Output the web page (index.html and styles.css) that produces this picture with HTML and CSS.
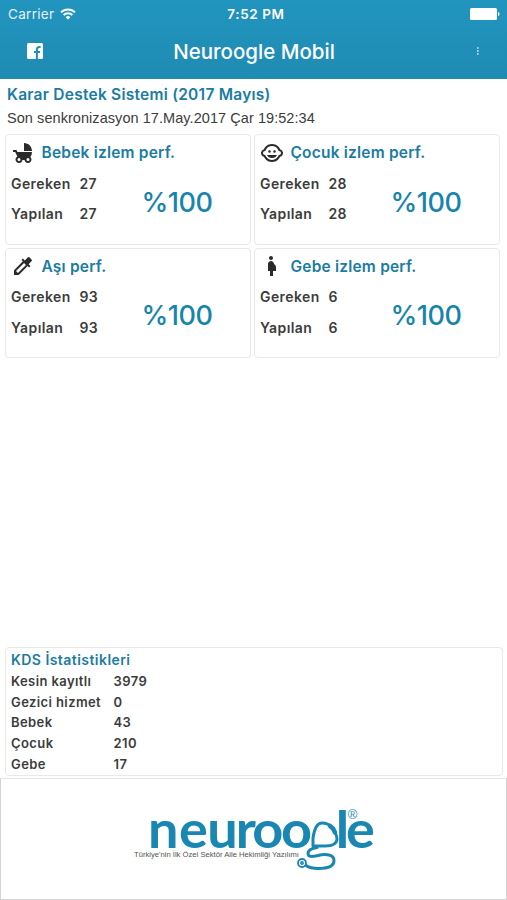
FILE: index.html
```html
<!DOCTYPE html>
<html lang="tr">
<head>
    <meta charset="UTF-8">
    <meta name="viewport" content="width=device-width, initial-scale=1.0">
    <title>Neuroogle Mobil</title>
    <link rel="stylesheet" href="styles.css">
</head>
<body>

<header class="header">
    <div class="status-bar">
        <div class="carrier">
            <span class="carrier-name">Carrier</span>
            <svg class="wifi" width="16" height="12" viewBox="0 0 16 12" fill="none" stroke="#fff" stroke-width="1.9">
                <path d="M1 4.3a10 10 0 0 1 14 0"/>
                <path d="M3.6 7a6.3 6.3 0 0 1 8.8 0"/>
                <path d="M8 11.6 5.6 9.2a3.5 3.5 0 0 1 4.8 0z" fill="#fff" stroke="none"/>
            </svg>
        </div>
        <span class="clock">7:52 PM</span>
        <svg class="battery" width="30" height="12" viewBox="0 0 30 12" fill="#fff">
            <rect x="0" y="0" width="27" height="12" rx="1.5"/>
            <path d="M28 4c2 .5 2 3.5 0 4z"/>
        </svg>
    </div>
    <div class="nav-bar">
        <svg class="facebook" width="16" height="16" viewBox="0 0 16 16">
            <rect width="16" height="16" rx="1.5" fill="#fff"/>
            <path d="M9.9 16V6.6c0-1.900 1-2.600 2.400-2.600h1.300M7 9h6" fill="none" stroke="#2090b8" stroke-width="2"/>
        </svg>
        <h1 class="title">Neuroogle Mobil</h1>
        <svg class="more" width="2" height="8" viewBox="0 0 2 8" fill="#a5d3e4">
            <rect width="1.6" height="2"/>
            <rect y="3" width="1.6" height="2"/>
            <rect y="6" width="1.6" height="2"/>
        </svg>
    </div>
</header>

<main class="content">
    <h2 class="system-title">Karar Destek Sistemi (2017 Mayıs)</h2>
    <p class="sync">Son senkronizasyon 17.May.2017 Çar 19:52:34</p>

    <div class="cards">
        <section class="card">
            <h3 class="card-title">
                <svg width="24" height="24" viewBox="0 0 24 24" fill="#2b2b2b">
                    <path d="M13 2v8h8c0-4.420-3.580-8-8-8zm6.320 13.890A7.948 7.948 0 0 0 21 11H6.440l-.95-2H2v2h2.220s1.890 4.070 2.120 4.420A3.490 3.490 0 0 0 4.500 18.500C4.500 20.430 6.070 22 8 22c1.760 0 3.220-1.300 3.460-3h2.080c.24 1.700 1.700 3 3.460 3 1.930 0 3.500-1.570 3.500-3.500 0-1.040-.46-1.970-1.180-2.610zM8 20a1.500 1.500 0 1 1 0-3 1.500 1.500 0 0 1 0 3zm9 0a1.500 1.500 0 1 1 0-3 1.500 1.500 0 0 1 0 3z"/>
                </svg>
                <span>Bebek izlem perf.</span>
            </h3>
            <div class="card-body">
                <dl class="counts">
                    <dt>Gereken</dt><dd>27</dd>
                    <dt>Yapılan</dt><dd>27</dd>
                </dl>
                <span class="percent">%100</span>
            </div>
        </section>
        <section class="card">
            <h3 class="card-title">
                <svg width="24" height="24" viewBox="0 0 24 24" fill="#2b2b2b">
                    <circle cx="14.500" cy="10.500" r="1.250"/>
                    <circle cx="9.500" cy="10.500" r="1.250"/>
                    <path d="M7 14c.76 1.770 2.490 3 5 3s4.240-1.230 5-3z"/>
                    <path d="M22.940 12.660c.04-.21.06-.43.06-.66s-.02-.45-.06-.66a4.008 4.008 0 0 0-2.810-3.170 9.114 9.114 0 0 0-2.190-2.910C16.360 3.850 14.280 3 12 3s-4.360.85-5.940 2.260c-.92.81-1.670 1.800-2.190 2.910a3.994 3.994 0 0 0-2.810 3.170c-.04.21-.06.43-.06.66s.02.45.06.66a4.008 4.008 0 0 0 2.810 3.170 8.977 8.977 0 0 0 2.170 2.890C7.620 20.140 9.710 21 12 21s4.380-.86 5.970-2.280c.9-.8 1.650-1.790 2.170-2.890a3.998 3.998 0 0 0 2.800-3.170zM19 14c-.1 0-.19-.02-.29-.03-.2.670-.49 1.290-.86 1.860C16.600 17.740 14.450 19 12 19s-4.600-1.260-5.850-3.170c-.37-.57-.66-1.190-.86-1.860-.1.010-.19.030-.29.030-1.100 0-2-.9-2-2s.9-2 2-2c.1 0 .19.020.29.030.2-.67.490-1.290.860-1.860C7.400 6.260 9.550 5 12 5s4.600 1.260 5.850 3.170c.37.570.660 1.190.860 1.860.1-.01.190-.03.290-.03 1.100 0 2 .9 2 2s-.9 2-2 2z"/>
                </svg>
                <span>Çocuk izlem perf.</span>
            </h3>
            <div class="card-body">
                <dl class="counts">
                    <dt>Gereken</dt><dd>28</dd>
                    <dt>Yapılan</dt><dd>28</dd>
                </dl>
                <span class="percent">%100</span>
            </div>
        </section>
        <section class="card">
            <h3 class="card-title">
                <svg width="24" height="24" viewBox="0 0 24 24" fill="#2b2b2b">
                    <path d="M20.710 5.630l-2.340-2.340a.996.996 0 0 0-1.410 0l-3.120 3.120-1.930-1.910-1.410 1.410 1.420 1.420L3 16.250V21h4.750l8.920-8.920 1.420 1.420 1.410-1.410-1.920-1.920 3.120-3.120c.400-.400.400-1.030.010-1.420zM6.920 19L5 17.080l8.060-8.060 1.920 1.920L6.920 19z"/>
                </svg>
                <span>Aşı perf.</span>
            </h3>
            <div class="card-body">
                <dl class="counts">
                    <dt>Gereken</dt><dd>93</dd>
                    <dt>Yapılan</dt><dd>93</dd>
                </dl>
                <span class="percent">%100</span>
            </div>
        </section>
        <section class="card">
            <h3 class="card-title">
                <svg width="24" height="24" viewBox="0 0 24 24" fill="#2b2b2b">
                    <path d="M9 4c0-1.110.89-2 2-2s2 .89 2 2-.89 2-2 2-2-.89-2-2zm7 9a3.285 3.285 0 0 0-2-3c0-1.660-1.340-3-3-3s-3 1.340-3 3v7h2v5h3v-5h3v-4z"/>
                </svg>
                <span>Gebe izlem perf.</span>
            </h3>
            <div class="card-body">
                <dl class="counts">
                    <dt>Gereken</dt><dd>6</dd>
                    <dt>Yapılan</dt><dd>6</dd>
                </dl>
                <span class="percent">%100</span>
            </div>
        </section>
    </div>

    <section class="stats">
        <h3 class="stats-title">KDS İstatistikleri</h3>
        <dl class="stats-list">
            <dt>Kesin kayıtlı</dt><dd>3979</dd>
            <dt>Gezici hizmet</dt><dd>0</dd>
            <dt>Bebek</dt><dd>43</dd>
            <dt>Çocuk</dt><dd>210</dd>
            <dt>Gebe</dt><dd>17</dd>
        </dl>
    </section>
</main>

<footer class="footer">
    <svg class="logo" width="260" height="100" viewBox="0 0 260 100">
        <g transform="scale(1.06 1)">
            <text class="logo-word" x="14.2 43.3 70 97 112.6 139.6" y="61.5">neuroo</text>
            <text class="logo-word" x="191.2 201" y="61.5">le</text>
        </g>
        <text class="logo-mark" x="219.5" y="32" text-anchor="middle">®</text>
        <text class="logo-slogan" x="1" y="70" textLength="165" lengthAdjust="spacingAndGlyphs">Türkiye'nin İlk Özel Sektör Aile Hekimliği Yazılımı</text>
        <!-- stethoscope in place of the g -->
        <g fill="none" stroke="#1a87b2" stroke-linecap="round" stroke-linejoin="round">
            <path d="M198 40c-2-3-5-4-9-4-6 0-8 8-9 15v8h12c8 0 12-3 12-7 0-3-1-5-3-8" stroke-width="3"/>
            <path d="M197 39l3 2.500 2 4" stroke-width="4.500"/>
            <path d="M184 60.500c-6 1-9 3-9 6 0 4 5 3 10 2 8-2 16-1 16 5 0 6-6 8-16 8-5 0-9-1-12-3" stroke-width="3"/>
            <circle cx="169" cy="76" r="4" fill="#fff" stroke-width="1.800"/>
            <circle cx="169" cy="76" r="1.200" stroke-width="1.500"/>
        </g>
    </svg>
</footer>

</body>
</html>
```
FILE: styles.css
```css
* {
    box-sizing: border-box;
}
body {
    margin: 0;
    height: 100vh;
    display: flex;
    flex-direction: column;
    font-family: Inter, sans-serif;
    background: #fff;
    color: #3c3c3c;
}
h1, h2, h3, p, dl, dd {
    margin: 0;
}
svg {
    display: block;
    flex-shrink: 0;
}

/* header */
.header {
    height: 79px;
    background: linear-gradient(#2195bf, #1f8bb2);
    color: #fff;
}
.status-bar {
    height: 27px;
    padding: 0 7px 0 8px;
    display: grid;
    grid-template-columns: 1fr auto 1fr;
    align-items: center;
    font-size: 13.5px;
}
.carrier {
    display: flex;
    align-items: center;
    gap: 6px;
    color: #e4f2f7;
    letter-spacing: 0.3px;
}
.clock {
    padding-left: 4px;
    font-weight: 600;
    letter-spacing: 0.6px;
}
.battery {
    justify-self: end;
}
.nav-bar {
    height: 49px;
    padding: 0 28px 0 27px;
    display: grid;
    grid-template-columns: 1fr auto 1fr;
    align-items: center;
}
.facebook, .more {
    margin-bottom: 2px;
}
.title {
    padding-left: 2px;
    font-size: 20.5px;
    font-weight: 500;
    line-height: 24px;
}
.more {
    justify-self: end;
}

/* content */
.content {
    flex: 1;
    display: flex;
    flex-direction: column;
    padding: 4px 4px 2px 5px;
}
.system-title {
    padding-left: 2px;
    font-size: 15.5px;
    font-weight: 600;
    line-height: 24px;
    letter-spacing: 0.25px;
    color: #1b7ca3;
}
.sync {
    padding-left: 2px;
    font-family: "Liberation Sans", Arial, sans-serif;
    font-size: 14.5px;
    line-height: 22px;
    letter-spacing: 0.06px;
}
.cards {
    margin-top: 5px;
    padding-right: 3px;
    display: grid;
    grid-template-columns: 1fr 1fr;
    gap: 3px;
}
.card {
    height: 110.5px;
    padding: 5px;
    border: 1px solid #e9e9e9;
    border-radius: 4px;
}
.card-title {
    display: flex;
    align-items: center;
    gap: 6.5px;
    height: 25px;
    font-size: 15.5px;
    font-weight: 600;
    letter-spacing: 0.2px;
    color: #1b7ca3;
}
.card-body {
    display: flex;
}
.counts {
    display: grid;
    grid-template-columns: 68.5px 62px;
    grid-auto-rows: 30.5px;
    align-items: center;
    margin-top: 3px;
    font-size: 14px;
    font-weight: 600;
    letter-spacing: 0.4px;
}
.percent {
    margin-top: 20.5px;
    font-size: 27px;
    line-height: 34px;
    font-weight: 500;
    letter-spacing: -0.5px;
    color: #1684ad;
}

/* statistics */
.stats {
    height: 129px;
    margin-top: auto;
    padding: 1px 5px;
    border: 1px solid #e9e9e9;
    border-radius: 4px;
}
.stats-title {
    font-size: 14px;
    font-weight: 600;
    line-height: 21.5px;
    letter-spacing: 0.45px;
    color: #1b7ca3;
}
.stats-list {
    display: grid;
    grid-template-columns: 102.5px auto;
    grid-auto-rows: 20.7px;
    align-items: center;
    font-size: 13px;
    font-weight: 600;
    letter-spacing: 0.4px;
}

/* footer */
.footer {
    height: 122px;
    padding: 8px 0 0 132px;
    border: 1px solid #d4d4d4;
    border-top-color: #e6e6e6;
}
.logo-word {
    font-family: Lato, sans-serif;
    font-size: 51px;
    font-weight: 700;
    fill: #1a87b2;
}
.logo-mark {
    font-family: "Liberation Sans", Arial, sans-serif;
    font-size: 13px;
    fill: #1a87b2;
}
.logo-slogan {
    font-family: "Liberation Sans", Arial, sans-serif;
    font-size: 7.5px;
    fill: #555;
}
```
